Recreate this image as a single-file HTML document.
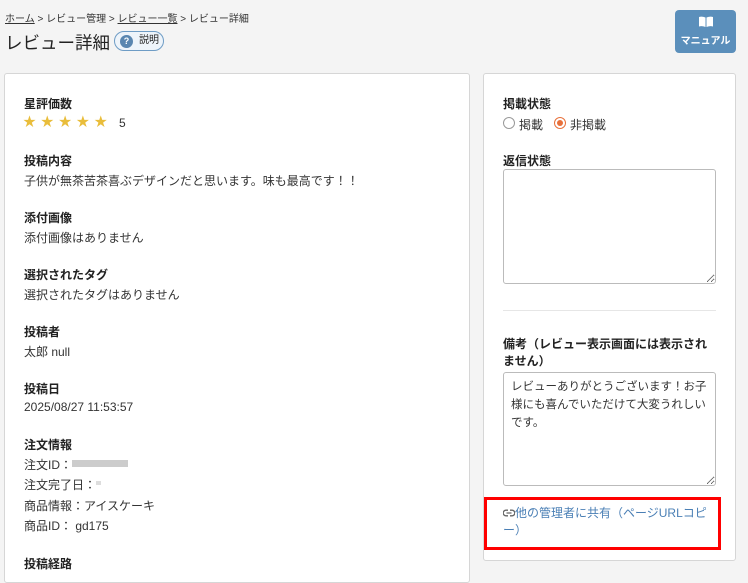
<!DOCTYPE html>
<html><head><meta charset="utf-8"><style>
*{box-sizing:border-box;margin:0;padding:0}
body{width:748px;height:570px;overflow:hidden;background:#f4f4f4;font-family:"Liberation Sans","Noto Sans CJK JP",sans-serif;color:#222;position:relative;font-size:12px}
.a{position:absolute;white-space:nowrap}
.bc{top:10px;left:5px;font-size:10px;color:#333}
.bc u{color:#333}
.card{position:absolute;background:#fff;border:1px solid #d6d6d6;border-radius:3px}
.l{font-weight:bold;font-size:12px}
.v{font-size:12px;color:#333}
textarea{position:absolute;border:1px solid #bbb;border-radius:3px;background:#fff;font-family:inherit;font-size:11.5px;line-height:18px;padding:5px 5px 5px 7px;color:#333;resize:both}
</style></head><body>
<div class="a bc"><u>ホーム</u> &gt; レビュー管理 &gt; <u>レビュー一覧</u> &gt; レビュー詳細</div>
<div class="a" style="top:30px;left:5px;font-size:17.5px">レビュー詳細</div>
<div class="a" style="top:31px;left:114px;width:50px;height:20px;border:1px solid #6e9cc5;border-radius:10px;background:#eef4fa;font-size:10px;line-height:18px;padding-left:24px">説明</div>
<div class="a" style="top:35px;left:120px;width:13px;height:13px;border-radius:50%;background:#5a86b0;color:#fff;font-size:9px;font-weight:bold;text-align:center;line-height:13px">?</div>
<div class="a" style="top:10px;left:675px;width:61px;height:43px;background:#5b8fbb;border-radius:4px;color:#fff;font-size:10px;font-weight:bold;text-align:center">
<svg width="14" height="12" viewBox="0 0 14 12" style="display:block;margin:6px auto 0"><path d="M0 1 Q3 0 6.5 1.5 V11 Q3 9.5 0 10.5Z M14 1 Q11 0 7.5 1.5 V11 Q11 9.5 14 10.5Z" fill="#fff"/></svg>
<div style="margin-top:4px">マニュアル</div></div>
<div class="card" style="left:4px;top:73px;width:466px;height:510px"></div>
<div class="card" style="left:483px;top:73px;width:253px;height:488px"></div>
<div class="a l" style="left:24px;top:95px">星評価数</div>
<div class="a" style="left:23px;top:111px;color:#e9bd3b;font-size:13px;letter-spacing:4.8px">★★★★★</div>
<div class="a v" style="left:119px;top:116px">5</div>
<div class="a l" style="left:24px;top:152px">投稿内容</div>
<div class="a v" style="left:24px;top:172px">子供が無茶苦茶喜ぶデザインだと思います。味も最高です！！</div>
<div class="a l" style="left:24px;top:209px">添付画像</div>
<div class="a v" style="left:24px;top:229px">添付画像はありません</div>
<div class="a l" style="left:24px;top:266px">選択されたタグ</div>
<div class="a v" style="left:24px;top:286px">選択されたタグはありません</div>
<div class="a l" style="left:24px;top:323px">投稿者</div>
<div class="a v" style="left:24px;top:343px">太郎 null</div>
<div class="a l" style="left:24px;top:380px">投稿日</div>
<div class="a v" style="left:24px;top:400px">2025/08/27 11:53:57</div>
<div class="a l" style="left:24px;top:436px">注文情報</div>
<div class="a v" style="left:24px;top:456px">注文ID：</div>
<div class="a" style="left:72px;top:460px;width:56px;height:7px;background:#ccc"></div>
<div class="a v" style="left:24px;top:476px">注文完了日：</div>
<div class="a" style="left:96px;top:481px;width:5px;height:4px;background:#ddd"></div>
<div class="a v" style="left:24px;top:497px">商品情報：アイスケーキ</div>
<div class="a v" style="left:24px;top:517px">商品ID： gd175</div>
<div class="a l" style="left:24px;top:555px">投稿経路</div>

<div class="a l" style="left:503px;top:95px">掲載状態</div>
<div class="a" style="left:503px;top:117px;width:12px;height:12px;border:1px solid #999;border-radius:50%"></div>
<div class="a v" style="left:519px;top:116px">掲載</div>
<div class="a" style="left:554px;top:117px;width:12px;height:12px;border:1px solid #e8703a;border-radius:50%"><div style="margin:2px;width:6px;height:6px;border-radius:50%;background:#e8703a"></div></div>
<div class="a v" style="left:570px;top:116px">非掲載</div>
<div class="a l" style="left:503px;top:152px">返信状態</div>
<textarea style="left:503px;top:169px;width:213px;height:115px"></textarea>
<div class="a" style="left:503px;top:310px;width:213px;height:1px;background:#e6e6e6"></div>
<div class="a l" style="left:503px;top:336px;white-space:normal;width:215px;line-height:17px">備考（レビュー表示画面には表示されません）</div>
<textarea style="left:503px;top:372px;width:213px;height:114px">レビューありがとうございます！お子様にも喜んでいただけて大変うれしいです。</textarea>
<div class="a" style="left:484px;top:497px;width:237px;height:53px;border:3px solid #f00"></div>
<div class="a" style="left:503px;top:505px;width:205px;white-space:normal;color:#4a7fb5;font-size:12px;line-height:17px"><svg width="12" height="8" viewBox="0 0 12 8" style="vertical-align:0"><path d="M5 1.2H3a2.8 2.8 0 0 0 0 5.6h2 M7 1.2h2a2.8 2.8 0 0 1 0 5.6H7 M3.5 4h5" stroke="#666" stroke-width="1.3" fill="none"/></svg>他の管理者に共有（ページURLコピー）</div>
</body></html>
